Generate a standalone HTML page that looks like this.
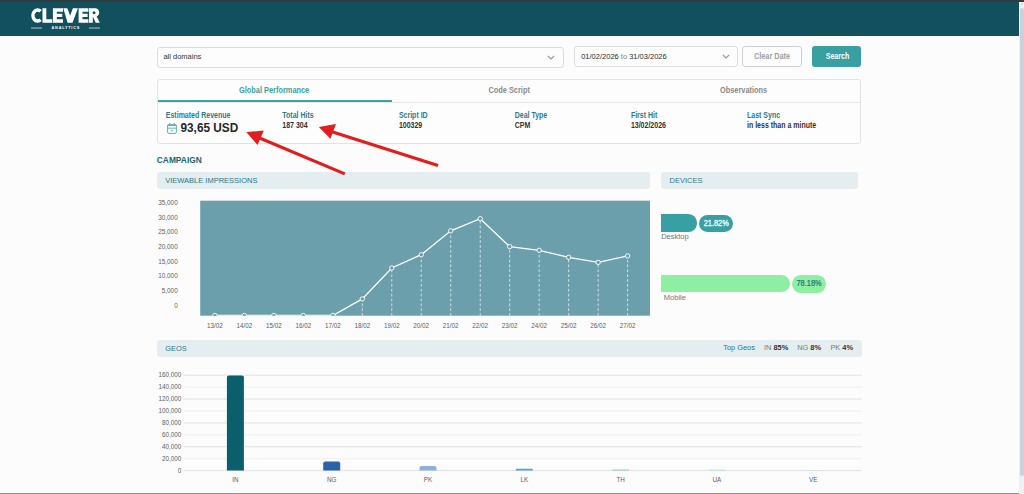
<!DOCTYPE html>
<html><head><meta charset="utf-8">
<style>
*{margin:0;padding:0;box-sizing:border-box}
html,body{width:1024px;height:494px;overflow:hidden;background:#fcfcfc;font-family:"Liberation Sans",sans-serif}
.a{position:absolute}
.t{position:absolute;white-space:nowrap;line-height:1}
</style></head><body>
<div class="a" style="left:0;top:0;width:1024px;height:35.6px;background:#12505d"></div>
<div class="a" style="left:0;top:0;width:1024px;height:1.6px;background:#2f3b3e"></div>
<svg class="a" style="left:0;top:0" width="110" height="36" viewBox="0 0 110 36">
<path d="M40.56 11.34 A4.6 5.5 0 1 0 40.56 19.76" fill="none" stroke="#fff" stroke-width="3.5"/>
<path d="M42.5 8.3 H46.3 V19.2 H52.3 V22.8 H42.5 Z" fill="#fff"/>
<path d="M52.9 8.3 H63 V11.7 H56.8 V13.8 H62.2 V17 H56.8 V19.3 H63 V22.8 H52.9 Z" fill="#fff"/>
<path d="M63.3 8.3 H67.3 L70.1 15.8 L72.9 8.3 H77.9 L72.5 22.8 H67.6 Z" fill="#fff"/>
<path d="M78.6 8.3 H88.4 V11.7 H82.5 V13.8 H87.6 V17 H82.5 V19.3 H88.4 V22.8 H78.6 Z" fill="#fff"/>
<path fill-rule="evenodd" d="M89 8.3 H94.6 C97.9 8.3 99.2 10.3 99.2 12.5 C99.2 14.4 98.2 15.8 96.6 16.4 L99.9 22.8 H95.7 L93 17.1 H92.8 V22.8 H89 Z M92.8 11.5 V14.1 H94.3 C95.1 14.1 95.5 13.6 95.5 12.8 C95.5 12 95.1 11.5 94.3 11.5 Z" fill="#fff"/>
<rect x="31" y="27.2" width="11" height="1.7" fill="#6a97a0"/>
<rect x="88.9" y="27.2" width="11" height="1.7" fill="#6a97a0"/>
</svg>
<div class="t" style="left:51.6px;top:27.4px;font-size:3.8px;color:#fff;font-weight:bold;letter-spacing:0.78px">ANALYTICS</div>
<div class="a" style="left:157px;top:46.5px;width:406.5px;height:21px;border:1px solid #dcdcdc;border-radius:3px;background:#fdfdfd"></div>
<div class="t" style="left:163.4px;top:53px;font-size:7.5px;color:#333">all domains</div>
<svg class="a" style="left:547.2px;top:54.9px" width="8" height="5"><path d="M0.9 1.0 L4 4.0 L7.1 1.0" fill="none" stroke="#979797" stroke-width="1.1"/></svg>
<div class="a" style="left:574px;top:46.3px;width:163.5px;height:20.6px;border:1px solid #dcdcdc;border-radius:3px;background:#fdfdfd"></div>
<div class="t" style="left:581.2px;top:52.9px;font-size:7.5px;color:#2a2a2a;transform:scaleY(1.08);transform-origin:0 3.7px">01/02/2026 <span style="color:#808080">to</span> 31/03/2026</div>
<svg class="a" style="left:721.8px;top:54.3px" width="8" height="5"><path d="M0.9 1.0 L4 4.0 L7.1 1.0" fill="none" stroke="#979797" stroke-width="1.1"/></svg>
<div class="a" style="left:742.4px;top:46.4px;width:59.4px;height:20.6px;border:1px solid #cfcfcf;border-radius:3px;background:#fdfdfd"></div>
<div class="t" style="left:754px;top:52.6px;font-size:7.3px;color:#9d9d9d;font-weight:bold;transform:scaleY(1.18);transform-origin:0 3.57px">Clear Date</div>
<div class="a" style="left:812.4px;top:46.4px;width:49px;height:20.3px;border-radius:3px;background:#38a0a3"></div>
<div class="t" style="left:825.7px;top:53.8px;font-size:7.1px;color:#fff;font-weight:bold;transform:scaleY(1.18);transform-origin:0 3.47px">Search</div>
<div class="a" style="left:156.6px;top:78.6px;width:704.4px;height:65.3px;border:1px solid #e2e2e2;border-radius:3px;background:#fdfdfd"></div>
<div class="a" style="left:157.6px;top:102.4px;width:702.4px;height:0.8px;background:#e6e6e6"></div>
<div class="a" style="left:157.6px;top:100.3px;width:234px;height:2px;background:#3ea3a6"></div>
<div class="t" style="left:239px;top:86.7px;font-size:7.4px;color:#3aa0a3;font-weight:bold;transform:scaleY(1.18);transform-origin:0 3.61px">Global Performance</div>
<div class="t" style="left:488.4px;top:86.7px;font-size:7.4px;color:#8a8a8a;font-weight:bold;transform:scaleY(1.18);transform-origin:0 3.61px">Code Script</div>
<div class="t" style="left:720px;top:86.7px;font-size:7.4px;color:#8a8a8a;font-weight:bold;transform:scaleY(1.18);transform-origin:0 3.61px">Observations</div>
<div class="t" style="left:165.8px;top:111.7px;font-size:7px;color:#2c7a8b;font-weight:bold;transform:scaleY(1.18);transform-origin:0 3.42px">Estimated Revenue</div>
<div class="t" style="left:282.3px;top:111.7px;font-size:7px;color:#2c7a8b;font-weight:bold;transform:scaleY(1.18);transform-origin:0 3.42px">Total Hits</div>
<div class="t" style="left:398.9px;top:111.7px;font-size:7px;color:#2c7a8b;font-weight:bold;transform:scaleY(1.18);transform-origin:0 3.42px">Script ID</div>
<div class="t" style="left:514.7px;top:111.7px;font-size:7px;color:#2c7a8b;font-weight:bold;transform:scaleY(1.18);transform-origin:0 3.42px">Deal Type</div>
<div class="t" style="left:630.9px;top:111.7px;font-size:7px;color:#2c7a8b;font-weight:bold;transform:scaleY(1.18);transform-origin:0 3.42px">First Hit</div>
<div class="t" style="left:747px;top:111.7px;font-size:7px;color:#2c7a8b;font-weight:bold;transform:scaleY(1.18);transform-origin:0 3.42px">Last Sync</div>
<svg class="a" style="left:164px;top:120px" width="16" height="16" viewBox="0 0 16 16"><g fill="#5db2b4"><rect x="3.6" y="4.7" width="8.8" height="8.7" rx="1.3" fill="none" stroke="#5db2b4" stroke-width="1"/><rect x="3.4" y="4.4" width="9.2" height="1.6" rx="0.6"/><rect x="3.6" y="7.7" width="8.8" height="0.9"/><rect x="5.1" y="3.1" width="1.2" height="2.4" rx="0.5"/><rect x="9.7" y="3.1" width="1.2" height="2.4" rx="0.5"/><rect x="7.1" y="9.8" width="1.5" height="1.5"/></g></svg>
<div class="t" style="left:180.5px;top:123.3px;font-size:11.8px;color:#262626;font-weight:bold;transform:scaleY(1.04);transform-origin:0 5.76px">93,65 USD</div>
<div class="t" style="left:282.3px;top:121.6px;font-size:7px;color:#333;font-weight:bold;transform:scaleY(1.18);transform-origin:0 3.42px">187 304</div>
<div class="t" style="left:398.9px;top:121.6px;font-size:7px;color:#333;font-weight:bold;transform:scaleY(1.18);transform-origin:0 3.42px">100329</div>
<div class="t" style="left:514.7px;top:121.6px;font-size:7px;color:#333;font-weight:bold;transform:scaleY(1.18);transform-origin:0 3.42px">CPM</div>
<div class="t" style="left:630.9px;top:121.6px;font-size:7px;color:#333;font-weight:bold;transform:scaleY(1.18);transform-origin:0 3.42px">13/02/2026</div>
<div class="t" style="left:747px;top:121.6px;font-size:7px;color:#333;font-weight:bold;transform:scaleY(1.18);transform-origin:0 3.42px">in less than a minute</div>
<div class="t" style="left:156.8px;top:156.1px;font-size:8.4px;color:#176579;font-weight:bold;transform:scaleY(1.16);transform-origin:0 4px">CAMPAIGN</div>
<div class="a" style="left:156.6px;top:172px;width:493.2px;height:16.9px;border-radius:3px;background:#e4edf0"></div>
<div class="t" style="left:165.2px;top:176.7px;font-size:7.5px;color:#2b7789">VIEWABLE IMPRESSIONS</div>
<div class="a" style="left:661px;top:172.3px;width:197px;height:16.4px;border-radius:3px;background:#e4edf0"></div>
<div class="t" style="left:669.6px;top:176.7px;font-size:7.5px;color:#307d8e">DEVICES</div>
<div class="t" style="right:846.30px;text-align:right;top:199.77px;font-size:6.4px;color:#5c5c5c;">35,000</div>
<div class="t" style="right:846.30px;text-align:right;top:214.50px;font-size:6.4px;color:#5c5c5c;">30,000</div>
<div class="t" style="right:846.30px;text-align:right;top:229.23px;font-size:6.4px;color:#5c5c5c;">25,000</div>
<div class="t" style="right:846.30px;text-align:right;top:243.96px;font-size:6.4px;color:#5c5c5c;">20,000</div>
<div class="t" style="right:846.30px;text-align:right;top:258.69px;font-size:6.4px;color:#5c5c5c;">15,000</div>
<div class="t" style="right:846.30px;text-align:right;top:273.42px;font-size:6.4px;color:#5c5c5c;">10,000</div>
<div class="t" style="right:846.30px;text-align:right;top:288.15px;font-size:6.4px;color:#5c5c5c;">5,000</div>
<div class="t" style="right:846.30px;text-align:right;top:302.88px;font-size:6.4px;color:#5c5c5c;">0</div>
<div class="t" style="left:184.90px;width:60px;text-align:center;top:322.72px;font-size:6.3px;color:#5c5c5c;">13/02</div>
<div class="t" style="left:214.38px;width:60px;text-align:center;top:322.72px;font-size:6.3px;color:#5c5c5c;">14/02</div>
<div class="t" style="left:243.86px;width:60px;text-align:center;top:322.72px;font-size:6.3px;color:#5c5c5c;">15/02</div>
<div class="t" style="left:273.34px;width:60px;text-align:center;top:322.72px;font-size:6.3px;color:#5c5c5c;">16/02</div>
<div class="t" style="left:302.82px;width:60px;text-align:center;top:322.72px;font-size:6.3px;color:#5c5c5c;">17/02</div>
<div class="t" style="left:332.30px;width:60px;text-align:center;top:322.72px;font-size:6.3px;color:#5c5c5c;">18/02</div>
<div class="t" style="left:361.78px;width:60px;text-align:center;top:322.72px;font-size:6.3px;color:#5c5c5c;">19/02</div>
<div class="t" style="left:391.26px;width:60px;text-align:center;top:322.72px;font-size:6.3px;color:#5c5c5c;">20/02</div>
<div class="t" style="left:420.74px;width:60px;text-align:center;top:322.72px;font-size:6.3px;color:#5c5c5c;">21/02</div>
<div class="t" style="left:450.22px;width:60px;text-align:center;top:322.72px;font-size:6.3px;color:#5c5c5c;">22/02</div>
<div class="t" style="left:479.70px;width:60px;text-align:center;top:322.72px;font-size:6.3px;color:#5c5c5c;">23/02</div>
<div class="t" style="left:509.18px;width:60px;text-align:center;top:322.72px;font-size:6.3px;color:#5c5c5c;">24/02</div>
<div class="t" style="left:538.66px;width:60px;text-align:center;top:322.72px;font-size:6.3px;color:#5c5c5c;">25/02</div>
<div class="t" style="left:568.14px;width:60px;text-align:center;top:322.72px;font-size:6.3px;color:#5c5c5c;">26/02</div>
<div class="t" style="left:597.62px;width:60px;text-align:center;top:322.72px;font-size:6.3px;color:#5c5c5c;">27/02</div>
<svg class="a" style="left:0;top:0" width="1024" height="494"><defs><clipPath id="cc"><rect x="200.2" y="200.7" width="449.8" height="115"/></clipPath></defs><rect x="200.2" y="200.7" width="449.8" height="115" fill="#6a9fab"/><g clip-path="url(#cc)"><line x1="362.30" y1="315.9" x2="362.30" y2="298.9" stroke="#e8f0f2" stroke-width="0.8" stroke-dasharray="2.8,2.06"/><line x1="391.78" y1="315.9" x2="391.78" y2="268" stroke="#e8f0f2" stroke-width="0.8" stroke-dasharray="2.8,2.06"/><line x1="421.26" y1="315.9" x2="421.26" y2="254.7" stroke="#e8f0f2" stroke-width="0.8" stroke-dasharray="2.8,2.06"/><line x1="450.74" y1="315.9" x2="450.74" y2="230.8" stroke="#e8f0f2" stroke-width="0.8" stroke-dasharray="2.8,2.06"/><line x1="480.22" y1="315.9" x2="480.22" y2="218.7" stroke="#e8f0f2" stroke-width="0.8" stroke-dasharray="2.8,2.06"/><line x1="509.70" y1="315.9" x2="509.70" y2="246.6" stroke="#e8f0f2" stroke-width="0.8" stroke-dasharray="2.8,2.06"/><line x1="539.18" y1="315.9" x2="539.18" y2="250.3" stroke="#e8f0f2" stroke-width="0.8" stroke-dasharray="2.8,2.06"/><line x1="568.66" y1="315.9" x2="568.66" y2="257.3" stroke="#e8f0f2" stroke-width="0.8" stroke-dasharray="2.8,2.06"/><line x1="598.14" y1="315.9" x2="598.14" y2="262.4" stroke="#e8f0f2" stroke-width="0.8" stroke-dasharray="2.8,2.06"/><line x1="627.62" y1="315.9" x2="627.62" y2="255.9" stroke="#e8f0f2" stroke-width="0.8" stroke-dasharray="2.8,2.06"/><polyline points="214.90,315.5 244.38,315.5 273.86,315.5 303.34,315.5 332.82,315.5 362.30,298.9 391.78,268 421.26,254.7 450.74,230.8 480.22,218.7 509.70,246.6 539.18,250.3 568.66,257.3 598.14,262.4 627.62,255.9" fill="none" stroke="#fff" stroke-width="1.3"/><circle cx="214.90" cy="315.5" r="2.2" fill="#6a9fab" stroke="#fff" stroke-width="0.9"/><circle cx="244.38" cy="315.5" r="2.2" fill="#6a9fab" stroke="#fff" stroke-width="0.9"/><circle cx="273.86" cy="315.5" r="2.2" fill="#6a9fab" stroke="#fff" stroke-width="0.9"/><circle cx="303.34" cy="315.5" r="2.2" fill="#6a9fab" stroke="#fff" stroke-width="0.9"/><circle cx="332.82" cy="315.5" r="2.2" fill="#6a9fab" stroke="#fff" stroke-width="0.9"/><circle cx="362.30" cy="298.9" r="2.2" fill="#6a9fab" stroke="#fff" stroke-width="0.9"/><circle cx="391.78" cy="268" r="2.2" fill="#6a9fab" stroke="#fff" stroke-width="0.9"/><circle cx="421.26" cy="254.7" r="2.2" fill="#6a9fab" stroke="#fff" stroke-width="0.9"/><circle cx="450.74" cy="230.8" r="2.2" fill="#6a9fab" stroke="#fff" stroke-width="0.9"/><circle cx="480.22" cy="218.7" r="2.2" fill="#6a9fab" stroke="#fff" stroke-width="0.9"/><circle cx="509.70" cy="246.6" r="2.2" fill="#6a9fab" stroke="#fff" stroke-width="0.9"/><circle cx="539.18" cy="250.3" r="2.2" fill="#6a9fab" stroke="#fff" stroke-width="0.9"/><circle cx="568.66" cy="257.3" r="2.2" fill="#6a9fab" stroke="#fff" stroke-width="0.9"/><circle cx="598.14" cy="262.4" r="2.2" fill="#6a9fab" stroke="#fff" stroke-width="0.9"/><circle cx="627.62" cy="255.9" r="2.2" fill="#6a9fab" stroke="#fff" stroke-width="0.9"/></g></svg>
<div class="a" style="left:661.2px;top:214.4px;width:35.7px;height:17.2px;background:#38a0a3;border-radius:0 8.6px 8.6px 0"></div>
<div class="a" style="left:699.2px;top:214.6px;width:33.9px;height:17.5px;background:#38a0a3;border-radius:8.75px"></div>
<div class="t" style="left:703.7px;top:219.9px;font-size:7.4px;color:#fff;-webkit-text-stroke:0.25px #fff;transform:scaleY(1.1);transform-origin:0 3.6px">21.82%</div>
<div class="t" style="left:661.2px;top:233.1px;font-size:7.5px;color:#747474">Desktop</div>
<div class="a" style="left:661.2px;top:275px;width:128.6px;height:17.2px;background:#8eeea2;border-radius:0 8.6px 8.6px 0"></div>
<div class="a" style="left:791.8px;top:275px;width:34.1px;height:17.8px;background:#8eeea2;border-radius:8.9px"></div>
<div class="t" style="left:796.5px;top:279.9px;font-size:7.4px;color:#23727c;-webkit-text-stroke:0.2px #23727c;transform:scaleY(1.1);transform-origin:0 3.6px">78.18%</div>
<div class="t" style="left:663.8px;top:294.4px;font-size:7.5px;color:#747474">Mobile</div>
<div class="a" style="left:156.9px;top:340px;width:704.7px;height:16.5px;border-radius:3px;background:#e4edf0"></div>
<div class="t" style="left:165.3px;top:344.5px;font-size:7.4px;color:#2b7789">GEOS</div>
<div class="t" style="left:723.3px;top:344.3px;font-size:7.4px;color:#2b7789">Top Geos</div>
<div class="t" style="left:764px;top:344.3px;font-size:7.4px;color:#7a7a7a">IN <b style="color:#333">85%</b></div>
<div class="t" style="left:797.2px;top:344.3px;font-size:7.4px;color:#7a7a7a">NG <b style="color:#333">8%</b></div>
<div class="t" style="left:830.4px;top:344.3px;font-size:7.4px;color:#7a7a7a">PK <b style="color:#333">4%</b></div>
<div class="t" style="right:842.80px;text-align:right;top:371.72px;font-size:6.3px;color:#5c5c5c;">160,000</div>
<div class="t" style="right:842.80px;text-align:right;top:383.70px;font-size:6.3px;color:#5c5c5c;">140,000</div>
<div class="t" style="right:842.80px;text-align:right;top:395.68px;font-size:6.3px;color:#5c5c5c;">120,000</div>
<div class="t" style="right:842.80px;text-align:right;top:407.66px;font-size:6.3px;color:#5c5c5c;">100,000</div>
<div class="t" style="right:842.80px;text-align:right;top:419.64px;font-size:6.3px;color:#5c5c5c;">80,000</div>
<div class="t" style="right:842.80px;text-align:right;top:431.62px;font-size:6.3px;color:#5c5c5c;">60,000</div>
<div class="t" style="right:842.80px;text-align:right;top:443.60px;font-size:6.3px;color:#5c5c5c;">40,000</div>
<div class="t" style="right:842.80px;text-align:right;top:455.58px;font-size:6.3px;color:#5c5c5c;">20,000</div>
<div class="t" style="right:842.80px;text-align:right;top:467.56px;font-size:6.3px;color:#5c5c5c;">0</div>
<div class="t" style="left:205.40px;width:60px;text-align:center;top:477.02px;font-size:6.3px;color:#5c5c5c;">IN</div>
<div class="t" style="left:301.70px;width:60px;text-align:center;top:477.02px;font-size:6.3px;color:#5c5c5c;">NG</div>
<div class="t" style="left:398.00px;width:60px;text-align:center;top:477.02px;font-size:6.3px;color:#5c5c5c;">PK</div>
<div class="t" style="left:494.30px;width:60px;text-align:center;top:477.02px;font-size:6.3px;color:#5c5c5c;">LK</div>
<div class="t" style="left:590.60px;width:60px;text-align:center;top:477.02px;font-size:6.3px;color:#5c5c5c;">TH</div>
<div class="t" style="left:686.90px;width:60px;text-align:center;top:477.02px;font-size:6.3px;color:#5c5c5c;">UA</div>
<div class="t" style="left:783.20px;width:60px;text-align:center;top:477.02px;font-size:6.3px;color:#5c5c5c;">VE</div>
<svg class="a" style="left:0;top:0" width="1024" height="494"><line x1="183.4" y1="375.20" x2="861.8" y2="375.20" stroke="#e0e0e0" stroke-width="1"/><line x1="183.4" y1="387.13" x2="861.8" y2="387.13" stroke="#efefef" stroke-width="1"/><line x1="183.4" y1="399.06" x2="861.8" y2="399.06" stroke="#e0e0e0" stroke-width="1"/><line x1="183.4" y1="410.99" x2="861.8" y2="410.99" stroke="#efefef" stroke-width="1"/><line x1="183.4" y1="422.92" x2="861.8" y2="422.92" stroke="#e0e0e0" stroke-width="1"/><line x1="183.4" y1="434.85" x2="861.8" y2="434.85" stroke="#efefef" stroke-width="1"/><line x1="183.4" y1="446.78" x2="861.8" y2="446.78" stroke="#e0e0e0" stroke-width="1"/><line x1="183.4" y1="458.71" x2="861.8" y2="458.71" stroke="#efefef" stroke-width="1"/><line x1="183.4" y1="470.64" x2="861.8" y2="470.64" stroke="#e0e0e0" stroke-width="1"/><path d="M226.90 470.6 V377.60 Q226.90 375.6 228.90 375.6 H241.90 Q243.90 375.6 243.90 377.60 V470.6 Z" fill="#0b5f6d"/><path d="M323.20 470.6 V463.50 Q323.20 461.5 325.20 461.5 H338.20 Q340.20 461.5 340.20 463.50 V470.6 Z" fill="#2a62a8"/><path d="M419.50 470.6 V468.00 Q419.50 466 421.50 466 H434.50 Q436.50 466 436.50 468.00 V470.6 Z" fill="#8fb1d7"/><path d="M515.80 470.6 V469.65 Q515.80 468.7 516.75 468.7 H531.85 Q532.80 468.7 532.80 469.65 V470.6 Z" fill="#4aa3d8"/><path d="M612.10 470.6 V470.10 Q612.10 469.6 612.60 469.6 H628.60 Q629.10 469.6 629.10 470.10 V470.6 Z" fill="#8ccaca"/><path d="M708.40 470.6 V470.20 Q708.40 469.8 708.80 469.8 H725.00 Q725.40 469.8 725.40 470.20 V470.6 Z" fill="#a9d9d3"/><path d="M804.70 470.6 V470.30 Q804.70 470.0 805.00 470.0 H821.40 Q821.70 470.0 821.70 470.30 V470.6 Z" fill="#c2eadb"/></svg>
<svg class="a" style="left:0;top:0" width="1024" height="494">
<line x1="344.8" y1="173.9" x2="256" y2="136.5" stroke="#e21d1d" stroke-width="3.2"/>
<polygon points="246.3,132.1 263.8,130.6 257.6,145" fill="#e21d1d"/>
<line x1="438" y1="165.6" x2="328" y2="130.5" stroke="#e21d1d" stroke-width="3.2"/>
<polygon points="318.8,127 336,124 330.4,138.7" fill="#e21d1d"/>
</svg>
<div class="a" style="left:0;top:492.8px;width:1019px;height:1.2px;background:#6aa3ab"></div>
<div class="a" style="left:1018.8px;top:1.6px;width:5.2px;height:492.4px;background:#eef0f3"></div>
<div class="a" style="left:1020.2px;top:8px;width:3.4px;height:468px;background:#cdd0d8;border-radius:2px"></div>
<div class="a" style="left:1020.8px;top:2.8px;width:2.4px;height:2.2px;background:#d3d6dc;border-radius:1px"></div>
</body></html>
